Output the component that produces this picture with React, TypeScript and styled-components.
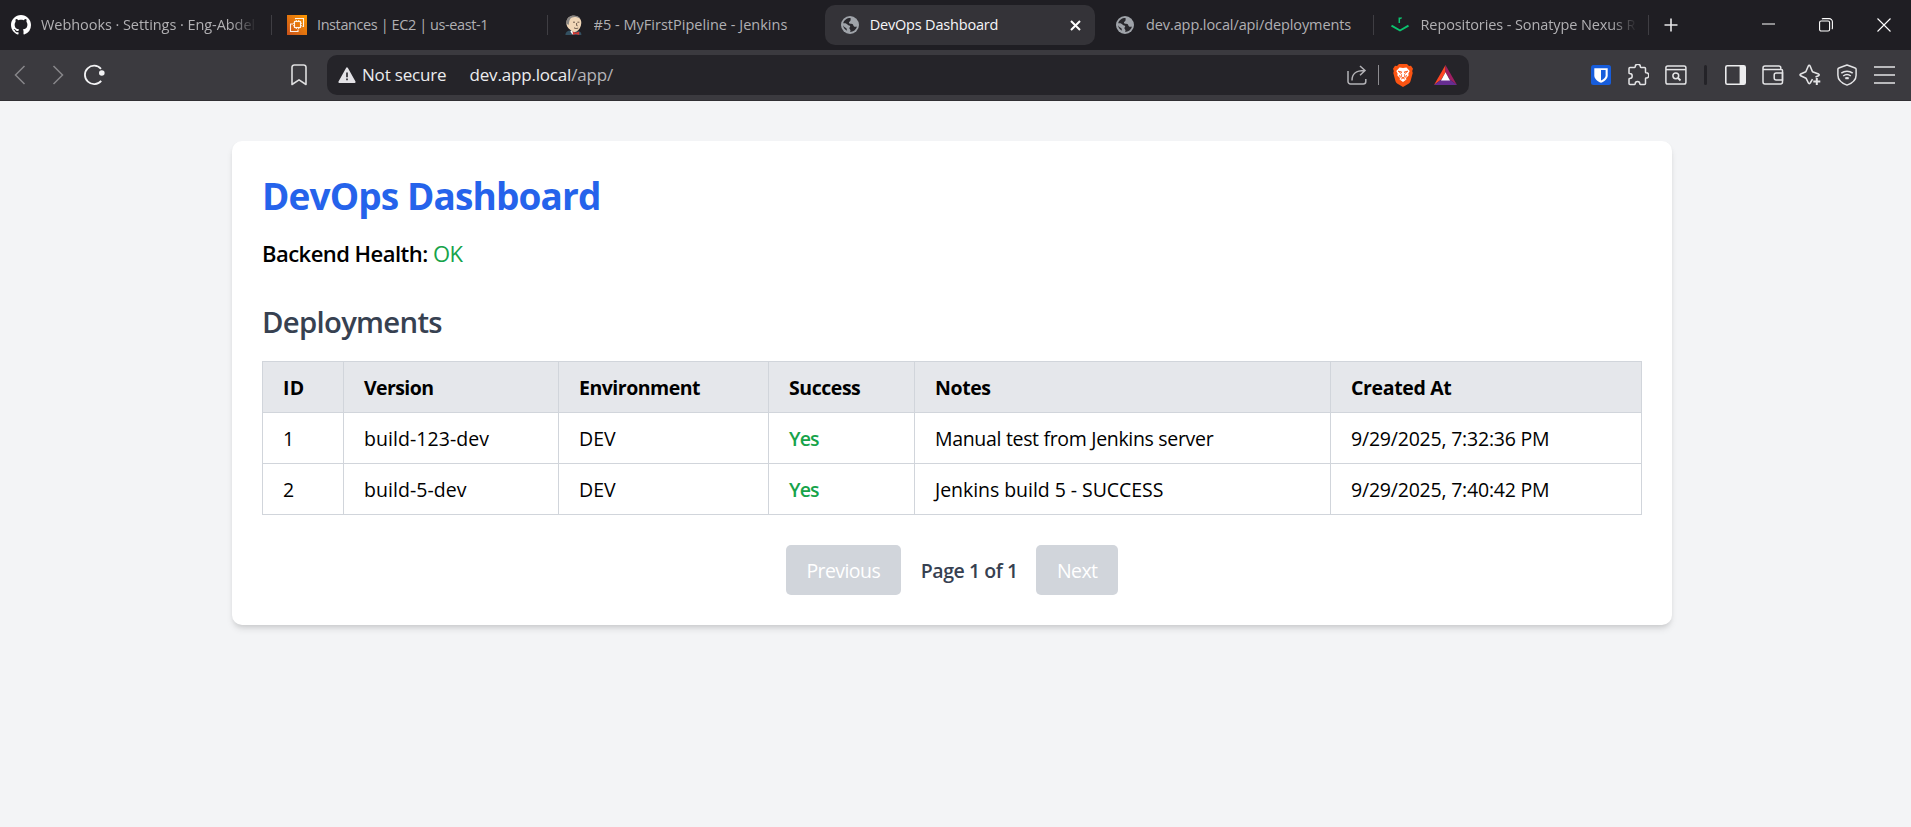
import React from "react";
import styled, { createGlobalStyle, css } from "styled-components";

const GlobalStyle = createGlobalStyle`
  *, *::before, *::after { box-sizing: border-box; }
  html, body { margin: 0; background: #f3f4f6; }
  body {
    font-family: "Open Sans", "Noto Sans", sans-serif;
    color: #000;
    overflow: hidden;
  }
  svg { display: block; flex: none; }
`;

/* ---------- browser frame ---------- */

const Screen = styled.div`
  display: flex;
  flex-direction: column;
  width: 100%;
  height: 100vh;
`;

const TabStrip = styled.div`
  display: flex;
  align-items: center;
  height: 50px;
  background: #1f1e23;
`;

const Tab = styled.div<{ $active?: boolean; $width?: number; $inset?: number }>`
  display: flex;
  align-items: center;
  flex: none;
  height: 40px;
  width: ${(p) => p.$width ?? 275.5}px;
  padding-left: ${(p) => p.$inset ?? 16}px;
  color: ${(p) => (p.$active ? "#f6f6f8" : "#b1b0b3")};
  ${(p) =>
    p.$active &&
    css`
      margin: 0 5px 0 3px;
      background: #343338;
      border-radius: 10px;
    `}
`;

const TabIcon = styled.span`
  display: flex;
  align-items: center;
  width: 30px;
`;

const TabTitle = styled.span<{ $tracking: number; $fade?: boolean }>`
  font-size: 14.5px;
  line-height: 20px;
  white-space: nowrap;
  letter-spacing: ${(p) => p.$tracking}px;
  overflow: hidden;
  width: ${(p) => (p.$fade ? 216 : 210)}px;
  padding-bottom: 1px;
  ${(p) => p.$fade && "mask-image: linear-gradient(to right, #000 190px, transparent 216px);"}
`;

const TabRule = styled.span`
  width: 1px;
  height: 20px;
  margin-right: -1px;
  flex: none;
  background: #3f3e43;
`;

const TabClose = styled.span`
  padding-right: 14px;
`;

const NewTab = styled.span`
  margin-left: 16px;
`;

const WindowButtons = styled.div`
  display: flex;
  align-items: center;
  gap: 44px;
  margin-left: auto;
  padding-right: 20px;
`;

const Toolbar = styled.div`
  display: flex;
  align-items: center;
  height: 51px;
  background: #3b3a3f;
  border-bottom: 1px solid #302f33;
`;

const NavButtons = styled.div`
  display: flex;
  align-items: center;
  width: 327px;
  padding-left: 14px;
`;

const NavButton = styled.span<{ $gap?: number }>`
  margin-right: ${(p) => p.$gap ?? 0}px;
`;

const AddressBar = styled.div`
  display: flex;
  align-items: center;
  width: 1142px;
  height: 40px;
  padding: 0 12px 0 11px;
  border-radius: 10px;
  background: #252429;
  color: #ececee;
  font-size: 17px;
  line-height: 24px;
`;

const Security = styled.span`
  width: 107.5px;
  margin-left: 6px;
  padding-bottom: 1px;
  letter-spacing: -0.19px;
`;

const Url = styled.span`
  flex: 1;
  padding-bottom: 1px;
  letter-spacing: -0.18px;
`;

const UrlPath = styled.span`
  color: #b5b4b8;
`;

const AddressActions = styled.div`
  display: flex;
  align-items: center;
`;

const AddressRule = styled.span`
  width: 1px;
  height: 20px;
  margin: 0 14px 0 11px;
  background: #8d8c90;
`;

const BatSlot = styled.span`
  margin-left: 21px;
`;

const Extensions = styled.div`
  display: flex;
  align-items: center;
  gap: 15.300px;
  margin-left: auto;
  padding-right: 15.500px;
`;

const ExtensionSlot = styled.span`
  display: flex;
  justify-content: center;
  width: 22px;
`;

const ExtensionRule = styled.span`
  width: 3px;
  height: 20px;
  margin: 0 2px;
  border-radius: 2px;
  background: #242328;
`;

/* ---------- dashboard page ---------- */

const Page = styled.main`
  flex: 1;
  padding: 40px 7px 0 0;
  background: #f3f4f6;
`;

const Card = styled.section`
  width: 1440px;
  height: 484px;
  margin: 0 auto;
  padding: 30px;
  border-radius: 10px;
  background: #fff;
  box-shadow: 0 5px 7.5px -1px rgba(0, 0, 0, 0.1), 0 2.5px 5px -2px rgba(0, 0, 0, 0.1);
`;

const Title = styled.h1`
  margin: 0 0 18px;
  padding-top: 2px;
  font-size: 37px;
  line-height: 45px;
  font-weight: 700;
  letter-spacing: -0.88px;
  color: #2563eb;
`;

const Health = styled.p`
  margin: 0 0 30px;
  font-size: 22px;
  line-height: 35px;
  font-weight: 600;
  letter-spacing: -0.53px;
`;

const HealthStatus = styled.span`
  font-weight: 400;
  color: #16a34a;
`;

const SectionTitle = styled.h2`
  margin: 0 0 19px;
  padding-top: 1px;
  font-size: 29.3px;
  line-height: 40px;
  font-weight: 600;
  letter-spacing: -0.7px;
  color: #374151;
`;

const Table = styled.table`
  width: 1380px;
  table-layout: fixed;
  border-collapse: collapse;
  font-size: 19.5px;
  line-height: 30px;
`;

const HeadCell = styled.th<{ $tracking: number }>`
  height: 51px;
  padding: 2px 20px 0;
  border: 1px solid #d1d5db;
  background: #e5e7eb;
  text-align: left;
  font-weight: 700;
  letter-spacing: ${(p) => p.$tracking}px;
`;

const Cell = styled.td<{ $tracking?: number; $ok?: boolean }>`
  height: 51px;
  padding: 2px 20px 0;
  border: 1px solid #d1d5db;
  white-space: nowrap;
  letter-spacing: ${(p) => p.$tracking ?? 0}px;
  ${(p) => p.$ok && "color: #16a34a; font-weight: 600;"}
`;

const Pager = styled.nav`
  display: flex;
  align-items: center;
  justify-content: center;
  gap: 20px;
  margin-top: 30px;
  font-size: 19.5px;
`;

const PageButton = styled.button<{ $width: number }>`
  width: ${(p) => p.$width}px;
  height: 50px;
  padding: 1px 0 0;
  border: 0;
  border-radius: 5px;
  background: #d1d5db;
  color: #fff;
  font: inherit;
  letter-spacing: -0.57px;
`;

const PageStatus = styled.span`
  width: 95.5px;
  padding-top: 1px;
  white-space: nowrap;
  font-weight: 600;
  letter-spacing: -0.45px;
  color: #374151;
`;

/* ---------- icons ---------- */

const GithubIcon = () => (
  <svg width="20" height="20" viewBox="0 0 16 16" fill="#fff">
    <path d="M8 0C3.58 0 0 3.58 0 8c0 3.54 2.29 6.53 5.47 7.59.4.07.55-.17.55-.38 0-.19-.01-.82-.01-1.49-2.01.37-2.53-.49-2.69-.94-.09-.23-.48-.94-.82-1.13-.28-.15-.68-.52-.01-.53.63-.01 1.08.58 1.23.82.72 1.21 1.87.87 2.33.66.07-.52.28-.87.51-1.07-1.78-.2-3.64-.89-3.64-3.95 0-.87.31-1.59.82-2.15-.08-.2-.36-1.02.08-2.12 0 0 .67-.21 2.2.82.64-.18 1.32-.27 2-.27s1.36.09 2 .27c1.53-1.04 2.2-.82 2.2-.82.44 1.1.16 1.92.08 2.12.51.56.82 1.27.82 2.15 0 3.07-1.87 3.75-3.65 3.95.29.25.54.73.54 1.48 0 1.07-.01 1.93-.01 2.2 0 .21.15.46.55.38A8.01 8.01 0 0 0 16 8c0-4.42-3.58-8-8-8z" />
  </svg>
);

const Ec2Icon = () => (
  <svg width="20" height="20" viewBox="0 0 20 20">
    <defs>
      <linearGradient id="ec2" x1="0" y1="1" x2="1" y2="0">
        <stop offset="0" stopColor="#c8511b" />
        <stop offset="1" stopColor="#ff9900" />
      </linearGradient>
    </defs>
    <rect width="20" height="20" fill="url(#ec2)" />
    <g fill="none" stroke="#fff" strokeOpacity=".9" strokeWidth="1.1">
      <rect x="7.5" y="6.5" width="6" height="6" />
      <path d="M8.5 4.2V3.5h8v8h-1M6 9H3.5v7.5H11v-2M9.3 5v1.5M11.7 5v1.5M13.5 8.2h1.5M13.5 10.7h1.5M9.3 12.5v1.5M11.7 12.5v1.5M6 8.2h1.5M6 10.7h1.5" />
    </g>
  </svg>
);

const JenkinsIcon = () => (
  <svg width="20" height="20" viewBox="0 0 20 20">
    <path d="M1.4 20c0-3 2-4.2 5-4.4l6 .4c3.5 .3 5 1 5 4z" fill="#335061" />
    <path d="M6.5 15c-3.2-2-4.6-5-4-8.5C3.2 2.7 6 .5 10 .7c4.5.2 7.5 3.3 7.3 7.3-.1 4-2.3 7-4.8 8.6l-3 1z" fill="#f0d6b7" />
    <path d="M2.6 10C1.600 5 4 1 9.500.6c3-.1 5.500 1 6.800 3C12 1.300 8 1.600 6.200 4c-1.300 2-1 4-1.700 6.500l-.6-1.600z" fill="#8a8784" />
    <path d="M9 7.200h2M13.400 7.200h2M12.600 8v2.500l1 .3M10 12.800c1.500.9 3 .9 4.200.2" stroke="#4b3b32" strokeWidth=".8" fill="none" />
    <path d="M7 16l2 3" stroke="#fff" strokeWidth="1.5" />
    <path d="M8.800 16.600l3 1.200 3.400-1.400v3.500l-3.400-1-3 1z" fill="#d33833" />
  </svg>
);

const GlobeIcon = () => (
  <svg width="18" height="18" viewBox="0 0 18 18">
    <circle cx="9" cy="9" r="9" fill="#9fa3a9" />
    <path
      d="M9.6 2.100C6 2 3 4.100 2.200 7.300c2-.5 3.700.2 4.500 1.400.6.900 2.300.4 2.500 1.600.1.900-.9 1-.8 2 .1.900.9 1.100 1.100 2 .1.600-.2 1.200-.5 1.700 3.400 0 6.200-2.200 6.900-5.400-1.300.5-2.700.3-3.300-.7-.5-.9-.4-1.700-1.400-2-1.200-.3-2.800.1-3.200-1C7.700 5.700 9 5.600 9.500 4.500c.4-.8-.1-1.500.1-2.400z"
      fill="#29282d"
    />
    <path d="M2.1 9.300c.9 2.300 2.400 2.200 3.200 3 .6.700.3 1.600.9 2.500-2.400-1-4-3-4.100-5.500z" fill="#29282d" />
  </svg>
);

const NexusIcon = () => (
  <svg width="18" height="18" viewBox="0 0 18 18" fill="none" stroke="#0bc46f" strokeWidth="1.9">
    <path d="M.5 9.700L9 14.500l8.500-4.800" />
    <path d="M8.300 7V1.500M8.300 3.200c.4-1 1.200-1.200 2.400-1.100" strokeWidth="1.5" />
  </svg>
);

const CloseIcon = () => (
  <svg width="11" height="11" viewBox="0 0 11 11" stroke="#fff" strokeWidth="2">
    <path d="M1 1l9 9M10 1l-9 9" />
  </svg>
);

const PlusIcon = () => (
  <svg width="14" height="14" viewBox="0 0 14 14" stroke="#e6e6e8" strokeWidth="1.6">
    <path d="M7 .5v13M.5 7h13" />
  </svg>
);

const MinimizeIcon = () => (
  <svg width="13" height="13" viewBox="0 0 13 13" stroke="#fff">
    <path d="M0 5h13" />
  </svg>
);

const RestoreIcon = () => (
  <svg width="14" height="14" viewBox="0 0 14 14" fill="none" stroke="#fff" strokeWidth="1.1">
    <rect x=".6" y="3" width="10" height="10" rx="1.5" />
    <path d="M3 1.100Q3.300.6 4 .6h6.200a3.200 3.200 0 0 1 3.200 3.200V10q0 .8-.6 1.100" />
  </svg>
);

const WindowCloseIcon = () => (
  <svg width="14" height="14" viewBox="0 0 14 14" stroke="#fff" strokeWidth="1.1">
    <path d="M.5.5l13 13M13.500.5l-13 13" />
  </svg>
);

const Chevron = ({ flip = false }: { flip?: boolean }) => (
  <svg width="12" height="20" viewBox="0 0 12 20" fill="none" stroke="#87868a" strokeWidth="1.5">
    <path d={flip ? "M1.5 1l9 9-9 9" : "M10.5 1l-9 9 9 9"} />
  </svg>
);

const ReloadIcon = () => (
  <svg width="22" height="22" viewBox="0 0 22 22" fill="none">
    <path d="M18.200 16.800a9.200 9.200 0 1 1-.2-12" stroke="#f2f2f4" strokeWidth="1.8" />
    <circle cx="18.8" cy="9" r="2.8" fill="#f2f2f4" />
  </svg>
);

const BookmarkIcon = () => (
  <svg width="16" height="22" viewBox="0 0 16 22" fill="none" stroke="#dededf" strokeWidth="1.6" strokeLinejoin="round">
    <path d="M1 3.300A2.300 2.300 0 0 1 3.300 1h9.400A2.300 2.300 0 0 1 15 3.300v17.200L8 15.800 1 20.500z" />
  </svg>
);

const WarningIcon = () => (
  <svg width="18" height="16" viewBox="0 0 18 16">
    <path d="M9 1.300L16.700 15H1.300z" fill="#e3e2e6" stroke="#e3e2e6" strokeWidth="1.8" strokeLinejoin="round" />
    <path d="M9 5.500v4.700M9 11.500v1.800" stroke="#252429" strokeWidth="1.6" />
  </svg>
);

const ShareIcon = () => (
  <svg width="20" height="20" viewBox="0 0 20 20" fill="none" stroke="#b3b2b6" strokeWidth="1.5">
    <path d="M1 6v10.500A2.500 2.500 0 0 0 3.500 19h12.800a2.500 2.500 0 0 0 2.500-2.500V14" />
    <path d="M5 15.500C5 8.500 8.500 5.500 17.500 5.500M13 1l5 4.500-5 4.800" />
  </svg>
);

const BraveIcon = () => (
  <svg width="20" height="23" viewBox="0 0 20 23">
    <path d="M6 0h8l2 2 2-.2 2 3-.8 2.200.5 2-2.200 8.200c-.3 1-.8 1.600-1.600 2.200L10 23l-5.900-3.600c-.8-.6-1.300-1.200-1.600-2.200L.3 9l.5-2L0 4.800l2-3 2 .2z" fill="#fb5412" />
    <path d="M10 4l3.500-.5 3.200 3.500-1.300 2.600.2 2-2.600 2.400.4 1.500L10 18l-3.400-2.500.4-1.500-2.600-2.400.2-2L3.300 7l3.200-3.500z" fill="#fff" />
    <path d="M5.200 7.200l3.500.7-.8 1.500zM14.800 7.200l-3.500.7.800 1.500zM8.600 10.300l-.6 2.200 2 1.300 2-1.300-.6-2.200M6.300 11.200l1.300 2.300M13.700 11.200l-1.300 2.300" fill="none" stroke="#fb5412" strokeWidth=".9" />
    <path d="M7.800 15.200L10 14.100l2.200 1.100" fill="none" stroke="#fb5412" strokeWidth=".8" />
  </svg>
);

const BatIcon = () => (
  <svg width="23" height="20" viewBox="0 0 23 20">
    <path d="M11.500 0v7.200L7.200 14.500 0 20z" fill="#ff4724" />
    <path d="M11.500 0v7.200l4.300 7.300L23 20z" fill="#9e1f63" />
    <path d="M0 20l7.200-5.500h8.600L23 20z" fill="#662d91" />
    <path d="M11.500 7.300l4.500 8.200H7z" fill="#fff" />
  </svg>
);

const BitwardenIcon = () => (
  <svg width="20" height="20" viewBox="0 0 20 20">
    <rect width="20" height="20" rx="2.5" fill="#175ddc" />
    <path d="M3.300 3.200h13.400v7.200c0 3.400-3 5.600-6.700 7.400-3.700-1.800-6.700-4-6.700-7.400z" fill="#fff" />
    <path d="M10 5h4.600v5.400c0 2.200-1.900 3.700-4.600 5.200z" fill="#175ddc" />
  </svg>
);

const PuzzleIcon = () => (
  <svg width="22" height="22" viewBox="0 0 22 22" fill="none" stroke="#e4e4e6" strokeWidth="1.5" strokeLinejoin="round">
    <path d="M3 3.500h4.600c.4 0 .6-.3.600-.7a2.600 2.600 0 0 1 5.200 0c0 .4.200.7.600.7h3.500c.6 0 1 .4 1 1v3.700c0 .4.300.6.700.6a2.600 2.600 0 0 1 0 5.200c-.4 0-.7.200-.7.600v4.900c0 .6-.4 1-1 1h-4.100c-.4 0-.6-.3-.6-.7a2.300 2.300 0 0 0-4.600 0c0 .4-.2.700-.6.700H3c-.6 0-1-.4-1-1v-4.300c0-.4.300-.6.700-.6a2.500 2.500 0 0 0 0-5C2.300 9.600 2 9.400 2 9V4.500c0-.6.400-1 1-1z" />
  </svg>
);

const SearchPageIcon = () => (
  <svg width="22" height="20" viewBox="0 0 22 20" fill="none" stroke="#e4e4e6" strokeWidth="1.5">
    <rect x=".9" y=".9" width="20" height="18.200" rx="1.8" />
    <path d="M1 4.600h20" />
    <circle cx="10.800" cy="10.800" r="2.9" />
    <path d="M13 13l2.500 2.500" strokeWidth="1.8" />
  </svg>
);

const SidebarIcon = () => (
  <svg width="21" height="20" viewBox="0 0 21 20">
    <rect x=".8" y=".8" width="19.400" height="18.400" rx="1.5" fill="none" stroke="#ececee" strokeWidth="1.6" />
    <path d="M14.600 1H20v18h-5.400z" fill="#ececee" />
  </svg>
);

const WalletIcon = () => (
  <svg width="22" height="20" viewBox="0 0 22 20" fill="none" stroke="#e4e4e6" strokeWidth="1.5">
    <path d="M18.800 4.600V3a2 2 0 0 0-2-2H3a2 2 0 0 0-2 2v14a2 2 0 0 0 2 2h15.500a2 2 0 0 0 2-2V5.600a1 1 0 0 0-1-1H2.600C1.600 4.600 1 4 1 3.200" />
    <path d="M20.500 8h-6.300a2 2 0 0 0-2 2v3a2 2 0 0 0 2 2h6.300z" />
  </svg>
);

const SparkleIcon = () => (
  <svg width="22" height="22" viewBox="0 0 22 22" fill="none" stroke="#e4e4e6" strokeWidth="1.6" strokeLinejoin="round">
    <path d="M13.500 15.200L11.200 19c-.4.9-1.400.9-1.800 0L7 14.200l-5.300-2.500c-.9-.4-.9-1.300 0-1.700L6.800 7.800 9.300 2c.4-.9 1.400-.9 1.800 0l2.400 5.800 6 2.200c.9.400.9 1.300 0 1.700l-3 1.300" />
    <path d="M17.800 14v7M14.300 17.500h7" strokeWidth="2" />
  </svg>
);

const VpnShieldIcon = () => (
  <svg width="20" height="22" viewBox="0 0 20 22" fill="none" stroke="#e4e4e6" strokeWidth="1.5" strokeLinejoin="round">
    <path d="M10 1l8.200 3c.6.200.9.600.9 1.200v6c0 4.600-4 8-9.100 9.900C4.900 19.200.9 15.800.9 11.200v-6c0-.6.300-1 .9-1.200z" />
    <path d="M4.300 9.200c3.300-2.600 8.100-2.600 11.400 0M6.200 12c2.200-1.700 5.400-1.700 7.600 0" />
    <path d="M8.300 14.600c1-.8 2.400-.8 3.400 0" strokeWidth="2" />
  </svg>
);

const MenuIcon = () => (
  <svg width="21" height="18" viewBox="0 0 21 18" stroke="#e4e4e6" strokeWidth="1.6">
    <path d="M0 1h21M0 9h21M0 17h21" />
  </svg>
);

/* ---------- data ---------- */

const columns = [
  { label: "ID", width: 81, tracking: 0.3 },
  { label: "Version", width: 215, tracking: -0.6 },
  { label: "Environment", width: 210, tracking: -0.5 },
  { label: "Success", width: 146, tracking: -0.45 },
  { label: "Notes", width: 416, tracking: -0.4 },
  { label: "Created At", width: 311, tracking: -0.35 },
];

const deployments = [
  { id: 1, version: "build-123-dev", env: "DEV", notes: "Manual test from Jenkins server", tracking: -0.32, createdAt: "9/29/2025, 7:32:36 PM" },
  { id: 2, version: "build-5-dev", env: "DEV", notes: "Jenkins build 5 - SUCCESS", tracking: -0.05, createdAt: "9/29/2025, 7:40:42 PM" },
];

const BrowserTabs = () => (
  <TabStrip>
    <Tab $width={271} $inset={11}>
      <TabIcon><GithubIcon /></TabIcon>
      <TabTitle $fade $tracking={-0.06}>Webhooks · Settings · Eng-Abdel</TabTitle>
    </Tab>
    <TabRule />
    <Tab>
      <TabIcon><Ec2Icon /></TabIcon>
      <TabTitle $tracking={-0.41}>Instances | EC2 | us-east-1</TabTitle>
    </Tab>
    <TabRule />
    <Tab $inset={17}>
      <TabIcon><JenkinsIcon /></TabIcon>
      <TabTitle $tracking={0.02}>#5 - MyFirstPipeline - Jenkins</TabTitle>
    </Tab>
    <Tab $active $width={270}>
      <TabIcon><GlobeIcon /></TabIcon>
      <TabTitle $tracking={-0.18}>DevOps Dashboard</TabTitle>
      <TabClose><CloseIcon /></TabClose>
    </Tab>
    <Tab $width={272.5}>
      <TabIcon><GlobeIcon /></TabIcon>
      <TabTitle $tracking={-0.1}>dev.app.local/api/deployments</TabTitle>
    </Tab>
    <TabRule />
    <Tab $width={275} $inset={18}>
      <TabIcon><NexusIcon /></TabIcon>
      <TabTitle $fade $tracking={-0.1}>Repositories - Sonatype Nexus R</TabTitle>
    </Tab>
    <TabRule />
    <NewTab><PlusIcon /></NewTab>
    <WindowButtons>
      <MinimizeIcon />
      <RestoreIcon />
      <WindowCloseIcon />
    </WindowButtons>
  </TabStrip>
);

const BrowserToolbar = () => (
  <Toolbar>
    <NavButtons>
      <NavButton $gap={26}><Chevron /></NavButton>
      <NavButton $gap={19}><Chevron flip /></NavButton>
      <NavButton $gap={185.5}><ReloadIcon /></NavButton>
      <BookmarkIcon />
    </NavButtons>
    <AddressBar>
      <WarningIcon />
      <Security>Not secure</Security>
      <Url>dev.app.local<UrlPath>/app/</UrlPath></Url>
      <AddressActions>
        <ShareIcon />
        <AddressRule />
        <BraveIcon />
        <BatSlot><BatIcon /></BatSlot>
      </AddressActions>
    </AddressBar>
    <Extensions>
      <ExtensionSlot><BitwardenIcon /></ExtensionSlot>
      <ExtensionSlot><PuzzleIcon /></ExtensionSlot>
      <ExtensionSlot><SearchPageIcon /></ExtensionSlot>
      <ExtensionRule />
      <ExtensionSlot><SidebarIcon /></ExtensionSlot>
      <ExtensionSlot><WalletIcon /></ExtensionSlot>
      <ExtensionSlot><SparkleIcon /></ExtensionSlot>
      <ExtensionSlot><VpnShieldIcon /></ExtensionSlot>
      <ExtensionSlot><MenuIcon /></ExtensionSlot>
    </Extensions>
  </Toolbar>
);

export default function App() {
  return (
    <Screen>
      <GlobalStyle />
      <BrowserTabs />
      <BrowserToolbar />
      <Page>
        <Card>
          <Title>DevOps Dashboard</Title>
          <Health>
            Backend Health: <HealthStatus>OK</HealthStatus>
          </Health>
          <SectionTitle>Deployments</SectionTitle>
          <Table>
            <colgroup>
              {columns.map((c) => (
                <col key={c.label} width={c.width} />
              ))}
            </colgroup>
            <thead>
              <tr>
                {columns.map((c) => (
                  <HeadCell key={c.label} $tracking={c.tracking}>{c.label}</HeadCell>
                ))}
              </tr>
            </thead>
            <tbody>
              {deployments.map((d) => (
                <tr key={d.id}>
                  <Cell>{d.id}</Cell>
                  <Cell $tracking={0.06}>{d.version}</Cell>
                  <Cell>{d.env}</Cell>
                  <Cell $ok $tracking={-0.9}>Yes</Cell>
                  <Cell $tracking={d.tracking}>{d.notes}</Cell>
                  <Cell $tracking={-0.21}>{d.createdAt}</Cell>
                </tr>
              ))}
            </tbody>
          </Table>
          <Pager>
            <PageButton $width={115} disabled>Previous</PageButton>
            <PageStatus>Page 1 of 1</PageStatus>
            <PageButton $width={82} disabled>Next</PageButton>
          </Pager>
        </Card>
      </Page>
    </Screen>
  );
}
